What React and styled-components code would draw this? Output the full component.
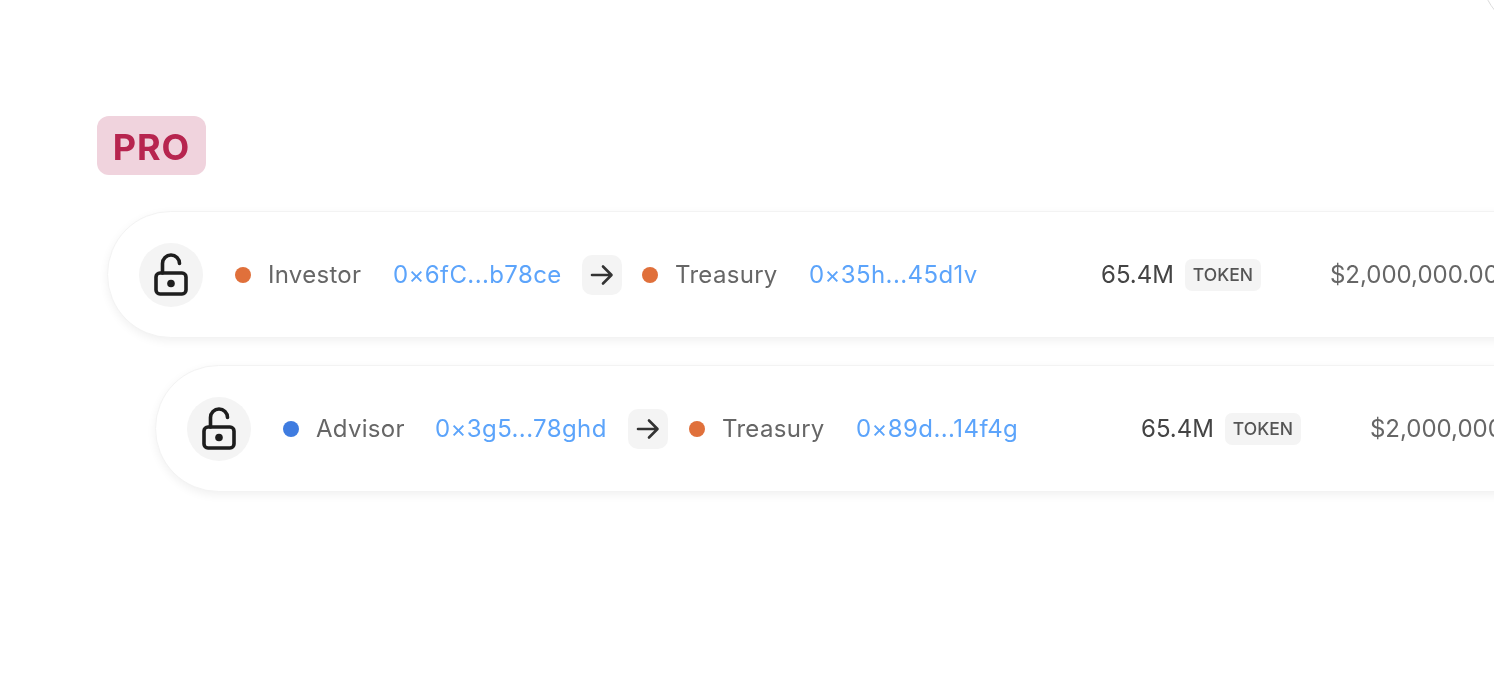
import styled, { createGlobalStyle } from "styled-components";

const GlobalStyle = createGlobalStyle`
  html, body {
    margin: 0;
    padding: 0;
    background: #fff;
    font-family: Inter, "Liberation Sans", sans-serif;
  }
`;

const Page = styled.div`
  position: relative;
  width: 1494px;
  height: 674px;
  overflow: hidden;
  background: #fff;
  padding-top: 116px;
  box-sizing: border-box;
  filter: blur(0.55px);
`;

const CornerArc = styled.div`
  position: absolute;
  top: -93px;
  left: 1480px;
  width: 200px;
  height: 127px;
  box-sizing: border-box;
  border-radius: 64px;
  border: 1px solid #dcdcdc;
`;

const ProBadge = styled.div`
  margin-left: 97px;
  width: 109px;
  height: 59px;
  box-sizing: border-box;
  padding-top: 3px;
  border-radius: 12px;
  background: #f0d3dd;
  color: #b7254f;
  font-size: 36px;
  font-weight: 700;
  letter-spacing: 1px;
  display: flex;
  align-items: center;
  justify-content: center;
`;

const Rows = styled.div`
  margin-top: 36px;
  display: flex;
  flex-direction: column;
  gap: 27px;
`;

const Row = styled.div`
  margin-left: ${(p) => p.$indent}px;
  width: 1600px;
  height: 127px;
  box-sizing: border-box;
  padding-left: 31px;
  border-radius: 64px;
  background: #fff;
  border: 1px solid #f3f3f3;
  box-shadow: 0 3px 10px rgba(0, 0, 0, 0.06);
  display: flex;
  align-items: center;
  white-space: nowrap;
  font-size: 24px;
  letter-spacing: 0.3px;
`;

const LockCircle = styled.div`
  width: 64px;
  height: 64px;
  flex: none;
  border-radius: 50%;
  background: #f4f4f4;
  display: flex;
  align-items: center;
  justify-content: center;
  margin-right: 32px;
`;

const Dot = styled.span`
  width: 16px;
  height: 16px;
  flex: none;
  border-radius: 50%;
  background: ${(p) => p.$color};
  margin-right: 17px;
`;

const Role = styled.span`
  color: #666;
  width: ${(p) => p.$width}px;
  flex: none;
`;

const Address = styled.span`
  color: #5ca4fb;
  width: ${(p) => p.$width}px;
  flex: none;
  letter-spacing: 0.4px;
`;

const ArrowBox = styled.div`
  width: 40px;
  height: 40px;
  flex: none;
  border-radius: 10px;
  background: #f4f4f4;
  display: flex;
  align-items: center;
  justify-content: center;
  margin-right: ${(p) => p.$after}px;
`;

const Amount = styled.span`
  color: #444;
  flex: none;
  margin-right: 11px;
  letter-spacing: 0;
`;

const TokenTag = styled.span`
  width: 76px;
  height: 32px;
  flex: none;
  border-radius: 7px;
  background: #f4f4f4;
  color: #555;
  font-size: 17.5px;
  font-weight: 500;
  letter-spacing: 0;
  display: flex;
  align-items: center;
  justify-content: center;
  margin-right: ${(p) => p.$after}px;
`;

const Price = styled.span`
  color: #666;
  flex: none;
  letter-spacing: 0;
`;

const LockIcon = () => (
  <svg width="36" height="44" viewBox="0 0 36 44" fill="none" stroke="#1d1d1d" strokeWidth="3.6">
    <path d="M9.5 20V10.5a8.5 8.5 0 0 1 17 0" strokeLinecap="round" />
    <rect x="3" y="20" width="30" height="21" rx="4" />
    <circle cx="18" cy="30.5" r="3.8" fill="#1d1d1d" stroke="none" />
  </svg>
);

const ArrowIcon = () => (
  <svg width="24" height="24" viewBox="0 0 24 24" fill="none" stroke="#333" strokeWidth="2.6" strokeLinecap="round" strokeLinejoin="round">
    <path d="M2 12h19M13 3.5l8.5 8.5-8.5 8.5" />
  </svg>
);

const rows = [
  {
    indent: 107,
    dot: "#e0703b",
    role: "Investor",
    roleWidth: 125,
    from: "0×6fC...b78ce",
    fromWidth: 189,
    arrowAfter: 20,
    to: "0×35h...45d1v",
    toAddrWidth: 292,
  },
  {
    indent: 155,
    dot: "#3f7ce0",
    role: "Advisor",
    roleWidth: 119,
    from: "0×3g5...78ghd",
    fromWidth: 193,
    arrowAfter: 21,
    to: "0×89d...14f4g",
    toAddrWidth: 285,
  },
];

export default function App() {
  return (
    <Page>
      <GlobalStyle />
      <CornerArc />
      <ProBadge>PRO</ProBadge>
      <Rows>
        {rows.map((r) => (
          <Row key={r.role} $indent={r.indent}>
            <LockCircle>
              <LockIcon />
            </LockCircle>
            <Dot $color={r.dot} />
            <Role $width={r.roleWidth}>{r.role}</Role>
            <Address $width={r.fromWidth}>{r.from}</Address>
            <ArrowBox $after={r.arrowAfter}>
              <ArrowIcon />
            </ArrowBox>
            <Dot $color="#e0703b" />
            <Role $width={134}>Treasury</Role>
            <Address $width={r.toAddrWidth}>{r.to}</Address>
            <Amount>65.4M</Amount>
            <TokenTag $after={69}>TOKEN</TokenTag>
            <Price>$2,000,000.00</Price>
          </Row>
        ))}
      </Rows>
    </Page>
  );
}
